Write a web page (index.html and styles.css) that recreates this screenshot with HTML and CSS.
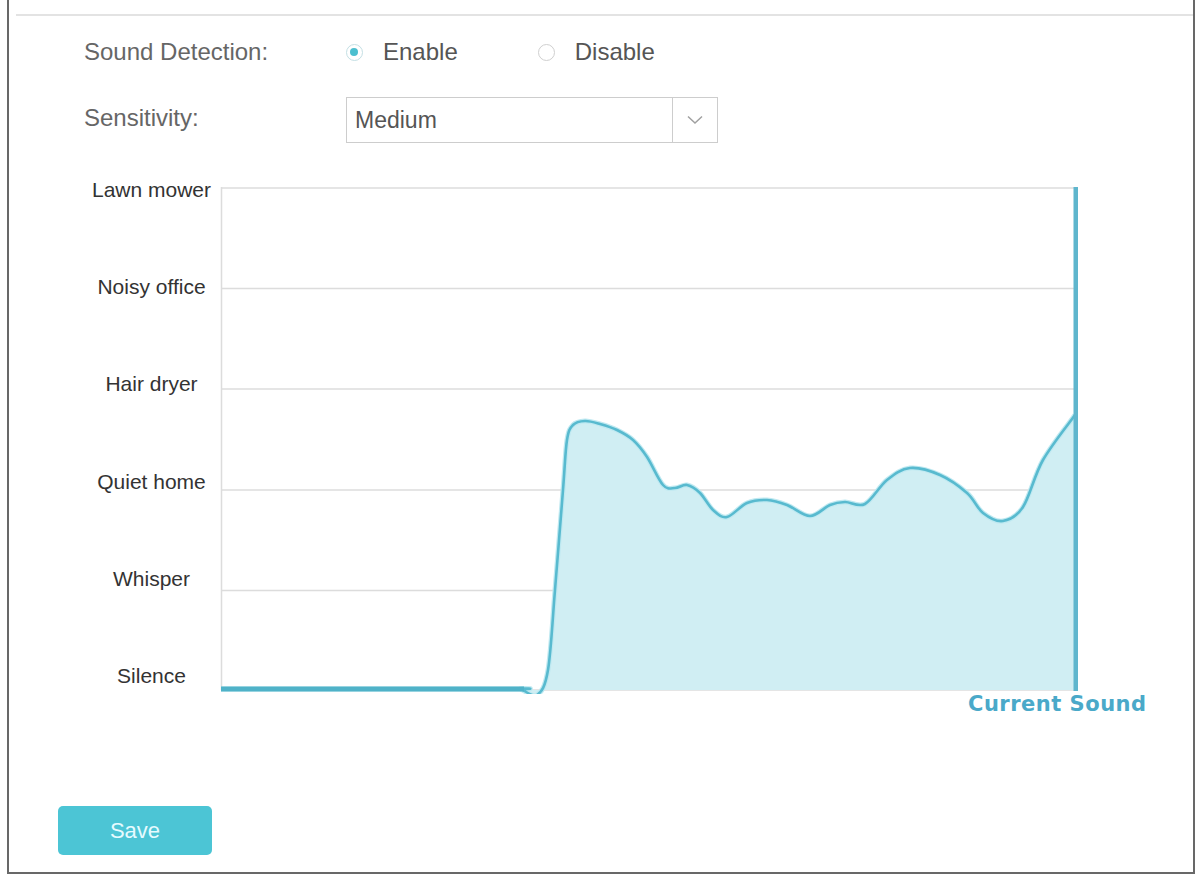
FILE: index.html
```html
<!DOCTYPE html>
<html lang="en">
<head>
<meta charset="UTF-8">
<meta name="viewport" content="width=device-width, initial-scale=1.0">
<title>Sound Detection</title>
<link rel="stylesheet" href="styles.css">
</head>
<body>

<div class="frame">
    <div class="top-rule"></div>

    <div class="form">
        <div class="row row-detect">
            <span class="label">Sound Detection:</span>
            <label class="option"><span class="radio checked"></span>Enable</label>
            <label class="option"><span class="radio"></span>Disable</label>
        </div>

        <div class="row row-sens">
            <span class="label">Sensitivity:</span>
            <div class="select">
                <span class="select-value">Medium</span>
                <span class="select-arrow">
                    <svg width="16" height="10" viewBox="0 0 16 10"><polyline points="1,1.5 8,8 15,1.5" fill="none" stroke="#a0a0a0" stroke-width="1.5"/></svg>
                </span>
            </div>
        </div>

        <div class="chart">
            <ul class="levels">
                <li>Lawn mower</li>
                <li>Noisy office</li>
                <li>Hair dryer</li>
                <li>Quiet home</li>
                <li>Whisper</li>
                <li>Silence</li>
            </ul>
            <svg class="plot" width="861" height="516" viewBox="219 178 861 516">
                <g stroke="#dcdcdc" stroke-width="1.5">
                    <line x1="221" y1="188" x2="1075" y2="188"/>
                    <line x1="221" y1="288.5" x2="1075" y2="288.5"/>
                    <line x1="221" y1="389" x2="1075" y2="389"/>
                    <line x1="221" y1="490" x2="1075" y2="490"/>
                    <line x1="221" y1="590.5" x2="1075" y2="590.5"/>
                    <line x1="221" y1="690" x2="1075" y2="690"/>
                    <line x1="221.5" y1="187" x2="221.5" y2="690"/>
                </g>
                <path id="soundFill" fill="#d0eef3" d=""/>
                <path id="soundGlow" fill="none" stroke="#bfe9f1" stroke-width="5" stroke-linejoin="round" d=""/>
                <path id="soundLine" fill="none" stroke="#58bacf" stroke-width="2.6" stroke-linejoin="round" d=""/>
                <line x1="221" y1="689" x2="524" y2="689" stroke="#4fb2c8" stroke-width="5"/>
                <rect x="1073.5" y="187" width="4.5" height="504" fill="#5fb6cd"/>
            </svg>
        </div>
        <div class="caption">Current Sound</div>
    </div>

    <button class="save">Save</button>
</div>

<script>
    const puntos = [
        [221,689],[505,689],[520,689],[537,695],[548,670],[555,590],[563,490],[567,440],
        [573,425],[585,421],[600,424],[617,430],[633,440],[647,457],[663,485],[675,488],
        [687,485],[700,493],[713,510],[727,517],[747,503],[767,500],[787,505],[810,516],
        [830,505],[845,502],[865,504],[887,480],[910,468],[940,475],[967,493],[983,513],
        [1003,521],[1023,507],[1043,460],[1075,415]
    ];

    function curva(p) {
        let d = 'M' + p[0][0] + ',' + p[0][1];
        for (let i = 0; i < p.length - 1; i++) {
            const p0 = p[i - 1] || p[i];
            const p1 = p[i];
            const p2 = p[i + 1];
            const p3 = p[i + 2] || p2;
            const c1x = p1[0] + (p2[0] - p0[0]) / 6;
            const c1y = p1[1] + (p2[1] - p0[1]) / 6;
            const c2x = p2[0] - (p3[0] - p1[0]) / 6;
            const c2y = p2[1] - (p3[1] - p1[1]) / 6;
            d += ' C' + c1x.toFixed(1) + ',' + c1y.toFixed(1) + ' ' + c2x.toFixed(1) + ',' + c2y.toFixed(1) + ' ' + p2[0] + ',' + p2[1];
        }
        return d;
    }

    const d = curva(puntos);
    document.getElementById('soundLine').setAttribute('d', d);
    document.getElementById('soundGlow').setAttribute('d', d);
    document.getElementById('soundFill').setAttribute('d', d + ' L1075,690 L221,690 Z');
</script>

</body>
</html>
```

FILE: styles.css
```css
body {
    margin: 0;
    padding: 0;
    background: #fff;
    font-family: "Liberation Sans", Arial, sans-serif;
}
.frame {
    box-sizing: border-box;
    margin-left: 7px;
    padding-top: 14px;
    width: 1188px;
    height: 874px;
    border-left: 2px solid #686868;
    border-right: 2px solid #686868;
    border-bottom: 2px solid #686868;
}
.top-rule {
    height: 2px;
    margin-left: 7px;
    background: #e3e3e3;
}
.form {
    padding-left: 75px;
}
.row {
    display: flex;
    align-items: center;
}
.row-detect {
    height: 40px;
    margin-top: 16px;
}
.row-sens {
    height: 46px;
    margin-top: 25px;
}
.label {
    width: 262px;
    font-size: 24px;
    color: #666;
}
.row-sens .label {
    margin-top: -4px;
}
.option {
    display: flex;
    align-items: center;
    font-size: 24px;
    color: #555;
    margin-right: 80px;
}
.radio {
    box-sizing: border-box;
    position: relative;
    width: 17px;
    height: 17px;
    margin-right: 20px;
    border: 1.5px solid #cfcfcf;
    border-radius: 50%;
    background: #fff;
}
.radio.checked {
    border-color: #c4dfe4;
}
.radio.checked::after {
    content: "";
    position: absolute;
    left: 3px;
    top: 3px;
    width: 8px;
    height: 8px;
    border-radius: 50%;
    background: #4cbfcf;
}
.select {
    box-sizing: border-box;
    display: flex;
    width: 372px;
    height: 46px;
    border: 1px solid #cdcdcd;
    background: #fff;
}
.select-value {
    flex: 1;
    display: flex;
    align-items: center;
    padding-left: 8px;
    font-size: 23px;
    color: #555;
}
.select-arrow {
    display: flex;
    align-items: center;
    justify-content: center;
    width: 44px;
    border-left: 1px solid #cdcdcd;
}
.chart {
    display: flex;
    margin-top: 35px;
}
.levels {
    list-style-type: none;
    margin: 0;
    padding: 0;
    width: 135px;
    height: 510px;
    display: flex;
    flex-direction: column;
    justify-content: space-between;
    font-size: 21px;
    line-height: 24px;
    color: #333;
    text-align: center;
}
.plot {
    display: block;
}
.caption {
    margin-left: 884px;
    margin-top: -2px;
    font-family: "DejaVu Sans", sans-serif;
    font-weight: bold;
    font-size: 21px;
    line-height: 24px;
    letter-spacing: 0.5px;
    color: #4aa9c9;
}
.save {
    display: block;
    margin: 90px 0 0 49px;
    width: 154px;
    height: 49px;
    border: none;
    border-radius: 5px;
    background: #4cc5d5;
    color: #e6fbff;
    font-family: "Liberation Sans", Arial, sans-serif;
    font-size: 22px;
    cursor: pointer;
}
```
